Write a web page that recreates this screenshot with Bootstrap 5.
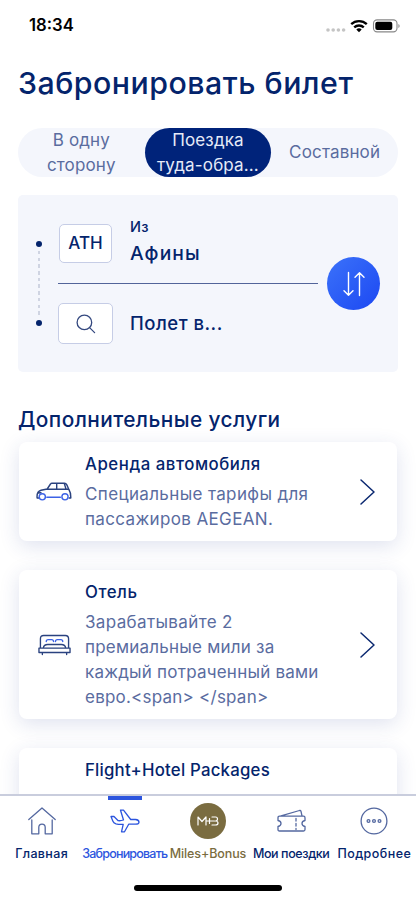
<!DOCTYPE html>
<html lang="ru">
<head>
<meta charset="utf-8">
<meta name="viewport" content="width=device-width, initial-scale=1">
<title>Забронировать билет</title>
<link href="https://cdn.jsdelivr.net/npm/bootstrap@5.3.0/dist/css/bootstrap.min.css" rel="stylesheet">
<style>
:root{--navy:#04246c;--slate:#5a6c9f;--blue:#2c55de;--mist:#f4f6fc;--gold:#7a6c40}
body{font-family:Inter,"Noto Sans",sans-serif;color:var(--navy);background:#fff}
.screen{width:416px;height:900px}
.screen svg{display:block;fill:none;stroke-linecap:round;stroke-linejoin:round;flex:none}
.status{height:52px;padding:0 16px 0 29px;color:#000}
.clock{font-size:16.7px;font-weight:600}
.page-title{font-size:30.3px;font-weight:500;line-height:36px;margin:13px 0 0 18px;letter-spacing:.5px;white-space:nowrap}
.segments{margin:27px 18px 0;height:49px;border-radius:25px;background:var(--mist);font-size:17px;line-height:25px;color:var(--slate)}
.segments>button{width:33.333%;border:0;background:none;color:inherit;padding:0;height:49px;letter-spacing:.15px}
.segments>.chosen{background:#00237a;color:#e6ebf8;border-radius:25px}
.route{margin:18px 18px 0;height:177px;border-radius:5px;background:var(--mist)}
.rail{width:5px;margin-left:18px;padding:46px 0 0}
.stop{width:6px;height:6px;border-radius:50%;background:var(--navy)}
.dash{width:2px;height:66px;margin:4px 0 3px;background:repeating-linear-gradient(#cfd4e2 0 3.5px,transparent 3.5px 6.7px)}
.legs{margin-left:17px;width:260px}
.tile{background:#fff;border:1.3px solid #c6cde6;border-radius:5px}
.tile-code{width:53px;height:39px;margin:7px 0 0 1px;font-size:17px;font-weight:500}
.tile-find{width:55px;height:41px}
.leg-a{height:89px;padding-top:22px;border-bottom:1px solid #52649a}
.leg-b{padding-top:19px}
.from{font-size:14.5px;font-weight:500;line-height:20px;letter-spacing:.3px}
.city{font-size:18.5px;font-weight:500;line-height:26px;letter-spacing:.5px}
.leg-a .city{margin-top:3px;font-size:19.3px;letter-spacing:1.1px}
.leg-b .city{margin:-2px 0 0 17px}
.leg-text{margin-left:18px}
.swap{width:53px;height:53px;margin:62px 0 0 9px;border-radius:50%;border:0;padding:0;background:linear-gradient(135deg,#3b72fa,#1c48f2)}
.section-title{font-size:20.8px;font-weight:500;line-height:26px;margin:35px 0 0 18px;letter-spacing:.44px;white-space:nowrap}
.offers{margin-top:9px}
.scroll-clip{height:794px}
.offer{margin:0 19px 29px;border:0;border-radius:8px;box-shadow:0 5px 20px rgba(40,60,150,.15);color:var(--navy)}
.offer-icon{width:66px;padding-left:17px}
.bed-icon{margin-left:1.5px}
.offer h3{font-size:16.8px;font-weight:500;line-height:22px;margin:0 0 7px}
.offer p{font-size:17px;line-height:25px;margin:0;color:var(--slate);font-weight:400;white-space:nowrap}
.offer-text{padding:11px 0 9px}
.go{margin-right:16px}
.tabs{height:106px;border-top:2px solid #c9cddd;background:#fff}
.tab{width:83.2px;font-size:12.5px;font-weight:500;line-height:16px;white-space:nowrap;color:var(--navy);text-decoration:none}
.tab-bar{width:34px;height:4px}
.tab.here{color:var(--blue)} .tab.here .tab-bar{background:var(--blue)}
.tab.gold{color:var(--gold)}
.tab-glyph{height:42px;margin-bottom:4px}
.medal{width:36px;height:36px;border-radius:50%;background:var(--gold)}
.home-pill{width:148px;height:6px;border-radius:3px;background:#000;margin-top:23px}
.w1{letter-spacing:.36px}.w2{letter-spacing:.54px}.w3{letter-spacing:.22px}
.t-home{letter-spacing:.35px}.t-book{letter-spacing:-.8px}.t-miles{letter-spacing:-.1px}.t-trip{letter-spacing:-.4px}.t-more{letter-spacing:.45px}
</style>
</head>
<body>
<div class="screen overflow-hidden">
<main class="scroll-clip overflow-hidden">
  <div class="status d-flex align-items-center justify-content-between">
    <span class="clock">18:34</span>
    <div class="d-flex align-items-center">
      <svg width="20" height="18" viewBox="0 0 20 18"><g style="fill:#c4c4c4"><circle cx="2" cy="13" r="1.8"/><circle cx="7.2" cy="13" r="1.8"/><circle cx="12.4" cy="13" r="1.8"/><circle cx="17.6" cy="13" r="1.8"/></g></svg>
      <svg class="ms-1" width="18" height="14" viewBox="0 0 18 14" stroke="#000" stroke-width="2.3" style="stroke-linecap:butt"><path d="M1.2 5.2a11.2 11.2 0 0 1 15.6 0M4.2 8.4a7 7 0 0 1 9.6 0"/><path d="M6.3 10.5a4 4 0 0 1 5.4 0L9 13.2z" fill="#000" stroke="none"/></svg>
      <svg class="ms-1" width="28" height="14" viewBox="0 0 28 14"><rect x="1.5" y=".9" width="23.5" height="12" rx="3.6" stroke="#888" stroke-width="1.1"/><rect x="3.3" y="2.7" width="17" height="8.4" rx="2" fill="#000"/><path d="M26.3 5v4q1.4-.6 1.4-2t-1.4-2z" fill="#999"/></svg>
    </div>
  </div>
  <h1 class="page-title">Забронировать билет</h1>
  <div class="segments d-flex">
    <button>В одну<br>сторону</button>
    <button class="chosen">Поездка<br>туда-обра...</button>
    <button>Составной</button>
  </div>
  <section class="route d-flex align-items-start">
    <div class="rail d-flex flex-column align-items-center"><span class="stop flex-shrink-0"></span><span class="dash"></span><span class="stop flex-shrink-0"></span></div>
    <div class="legs">
      <div class="leg-a d-flex">
        <div class="tile tile-code d-flex align-items-center justify-content-center">ATH</div>
        <div class="leg-text"><div class="from">Из</div><div class="city">Афины</div></div>
      </div>
      <div class="leg-b d-flex align-items-center">
        <div class="tile tile-find d-flex align-items-center justify-content-center"><svg width="20" height="20" viewBox="0 0 20 20" stroke="#34487f" stroke-width="1.3"><circle cx="8.4" cy="8.4" r="7.3"/><path d="M13.6 13.6l5 5"/></svg></div>
        <div class="city">Полет в...</div>
      </div>
    </div>
    <button class="swap d-flex align-items-center justify-content-center"><svg width="22" height="26" viewBox="0 0 22 26" stroke="#fff" stroke-width="1.4"><path d="M5.5 1.5v22.7M1 19.8l4.500 4.500 4.500-4.500M16.500 24.500V1.800M12 6.200l4.500-4.500L21 6.200"/></svg></button>
  </section>
  <h2 class="section-title">Дополнительные услуги</h2>
  <div class="offers">
  <article class="card offer flex-row align-items-center">
    <div class="offer-icon"><svg width="36" height="20" viewBox="0 0 36 20" stroke="#2a427f" stroke-width="1.400"><path d="M2.800 16H1.100Q.5 9.500 5 8.300l6.200-1.300 3.300-5Q15 1.200 16 1.200h12.500q1.500 0 2.200 1.400l2.200 4.900q2 3 1.900 8.500h-1.600M11.200 7.200h21.300M20.700 1.500v5.500M28.300 1.500l1.700 5.500M2 11l3-.3"/><g stroke="#3c62e6"><circle cx="6.300" cy="14.800" r="3.100"/><circle cx="29" cy="14.800" r="3.100"/><path d="M10.800 15.300h13.600"/></g></svg></div>
    <div class="offer-text flex-grow-1"><h3 class="w2">Аренда автомобиля</h3><p class="w1">Специальные тарифы для<br>пассажиров AEGEAN.</p></div>
    <svg class="go" width="24" height="28" viewBox="0 0 24 28" stroke="#0b2870" stroke-width="1.500"><path d="M4 2l13 12L4 26"/></svg>
  </article>
  <article class="card offer flex-row align-items-center">
    <div class="offer-icon"><svg class="bed-icon" width="33" height="22" viewBox="0 0 34 22" stroke="#2a427f" stroke-width="1.400"><path d="M2.500 14V4.500Q2.500 1.200 5.800 1.200h22.400q3.300 0 3.300 3.300V14M1 14.200h32v4.500H1zM4.500 18.800v2M29.500 18.800v2M5.500 14q.5-3.500 4.500-3.500h14q4 0 4.500 3.500"/><path stroke="#3c62e6" d="M8.500 7.500q0-2 2-2h3.500q2 0 2 2M18 7.500q0-2 2-2h3.500q2 0 2 2"/></svg></div>
    <div class="offer-text flex-grow-1"><h3 class="w2">Отель</h3><p class="w1">Зарабатывайте 2<br><span class="w3">премиальные мили за<br>каждый потраченный вами<br>евро.&lt;span&gt; &lt;/span&gt;</span></p></div>
    <svg class="go" width="24" height="28" viewBox="0 0 24 28" stroke="#0b2870" stroke-width="1.500"><path d="M4 2l13 12L4 26"/></svg>
  </article>
  <article class="card offer flex-row align-items-center">
    <div class="offer-icon"></div>
    <div class="offer-text flex-grow-1"><h3 class="w3">Flight+Hotel Packages</h3><p><br><br></p></div>
  </article>
  </div>
</main>
<footer class="tabs">
  <nav class="d-flex">
    <a class="tab d-flex flex-column align-items-center" href="#"><span class="tab-bar"></span><span class="tab-glyph d-flex align-items-center"><svg width="28" height="28" viewBox="0 0 28 28" stroke="#5468a0" stroke-width="1.300"><path d="M.8 12.500L14 1l13.200 11.500M3.800 13v13.800h7v-6.500q0-3.200 3.200-3.200t3.200 3.200v6.500h7V13"/></svg></span><span class="t-home">Главная</span></a>
    <a class="tab here d-flex flex-column align-items-center" href="#"><span class="tab-bar"></span><span class="tab-glyph d-flex align-items-center"><svg width="30" height="24" viewBox="0 0 30 24" stroke="#2c55de" stroke-width="1.300"><path d="M1 7.500h3l4.200 4.200q2.500.3 5.300-.7L10.500 1.200h3l7.200 9.300h4.800q3.500.3 3.500 2.800 0 1.900-3.500 1.900h-6.800l-4.200 7.600h-3l1.700-7.500Q8.500 15.500 6 14.800 3.500 14 2.800 12z"/></svg></span><span class="t-book">Забронировать</span></a>
    <a class="tab gold d-flex flex-column align-items-center" href="#"><span class="tab-bar"></span><span class="tab-glyph d-flex align-items-center"><span class="medal d-flex align-items-center justify-content-center"><svg width="22" height="10" viewBox="0 0 22 10" stroke="#fff" stroke-width="1.200"><path d="M1 9V1l4 4.500L9 1v8M9.500 5h8M12.500 2.500v5M15 1h3.500q2 0 2 2t-2 2q2.500 0 2.500 2t-2.500 2H15"/></svg></span></span><span class="t-miles">Miles+Bonus</span></a>
    <a class="tab d-flex flex-column align-items-center" href="#"><span class="tab-bar"></span><span class="tab-glyph d-flex align-items-center"><svg width="29" height="24" viewBox="0 0 29 24" stroke="#5468a0" stroke-width="1.300"><path d="M2.500 7.200h24q1.500 0 1.500 1.500v2.800q-3 .6-3 3t3 3v3q0 1.500-1.500 1.500h-24Q1 22 1 20.500v-3q3-.6 3-3t-3-3V8.700q0-1.500 1.500-1.500zM4 6.800L22.500 1.500q1.200-.3 1.500.8l1 4.500"/><path stroke-dasharray="2.500 2.500" d="M19 9.500v11"/></svg></span><span class="t-trip">Мои поездки</span></a>
    <a class="tab d-flex flex-column align-items-center" href="#"><span class="tab-bar"></span><span class="tab-glyph d-flex align-items-center"><svg width="28" height="28" viewBox="0 0 28 28" stroke="#5468a0" stroke-width="1.300"><circle cx="14" cy="14" r="12.900"/><circle cx="8.500" cy="14" r="1.400"/><circle cx="14" cy="14" r="1.400"/><circle cx="19.500" cy="14" r="1.400"/></svg></span><span class="t-more">Подробнее</span></a>
  </nav>
  <div class="home-pill mx-auto"></div>
</footer>
</div>
<script src="https://cdn.jsdelivr.net/npm/bootstrap@5.3.0/dist/js/bootstrap.bundle.min.js"></script>
</body>
</html>
